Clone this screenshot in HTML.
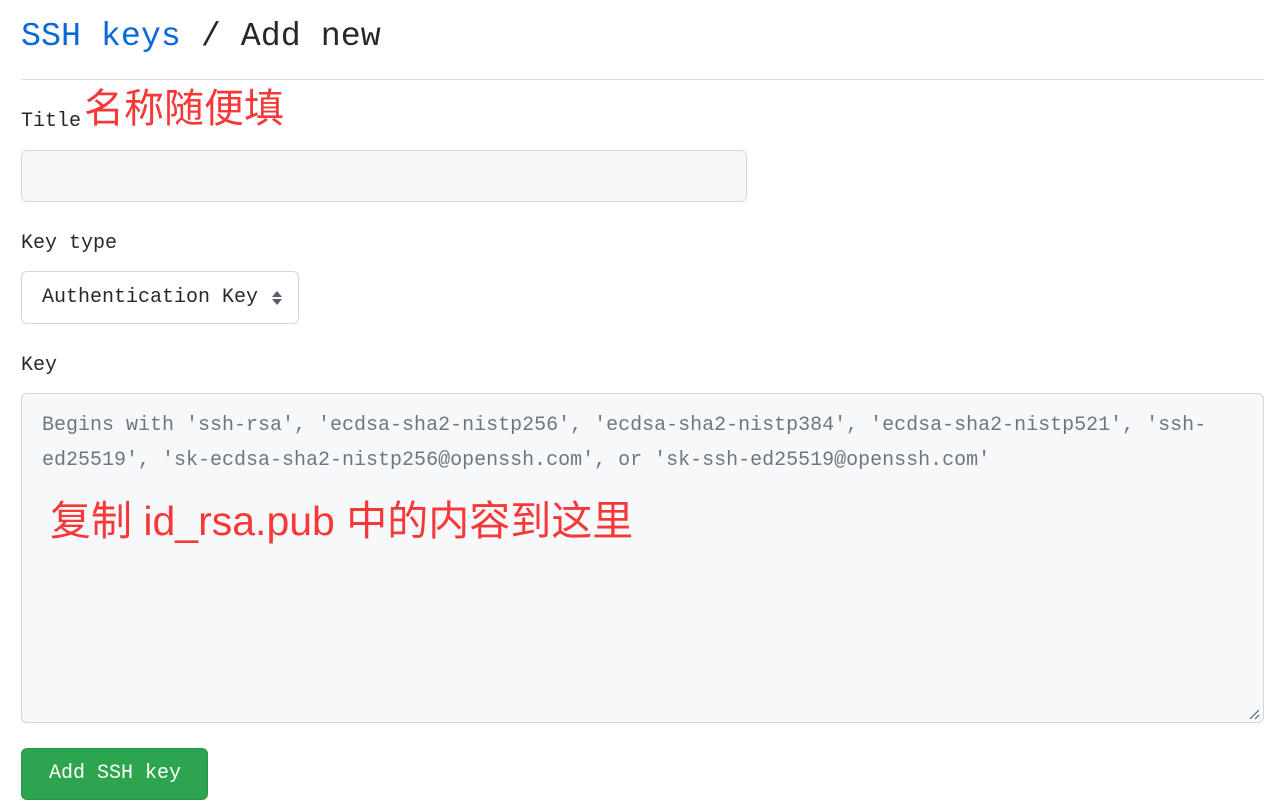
<!DOCTYPE html>
<html><head><meta charset="utf-8"><style>
body{margin:0;background:#fff;width:1282px;height:809px;overflow:hidden;position:relative;font-family:"Liberation Mono",monospace;color:#24292f}
.a{position:absolute;white-space:nowrap}
.m{font-size:20px;letter-spacing:0}
.box{position:absolute;border:1px solid #d0d7de;border-radius:6px;box-sizing:border-box}
.red{color:#f73838;font-family:"Liberation Sans","Noto Sans CJK SC",sans-serif}
</style></head><body>
<div class="a" style="left:21px;top:12px;font-size:33.3px;line-height:48px"><span style="color:#0969da">SSH keys</span> / Add new</div>
<div class="a" style="left:21px;right:18px;top:79px;height:1px;background:#d8dee4"></div>
<div class="a m" style="left:21px;top:110px;line-height:24px">Title</div>
<div class="a red" style="left:84px;top:84px;font-size:40px;line-height:50px">名称随便填</div>
<div class="box" style="left:21px;top:150px;width:726px;height:52px;background:#f6f8fa"></div>
<div class="a m" style="left:21px;top:232px;line-height:24px">Key type</div>
<div class="box" style="left:21px;top:271px;width:278px;height:53px;background:#fff"></div>
<div class="a m" style="left:42px;top:286px;line-height:24px">Authentication Key</div>
<svg class="a" style="left:270px;top:289px" width="14" height="18" viewBox="0 0 14 18"><path d="M7 2 L12 8 H2Z M2 10 H12 L7 16Z" fill="#57606a"/></svg>
<div class="a m" style="left:21px;top:354px;line-height:24px">Key</div>
<div class="box" style="left:21px;top:393px;width:1243px;height:330px;background:#f6f8fa"></div>
<div class="a m" style="left:42px;top:408px;line-height:35px;color:#6e7781">Begins with 'ssh-rsa', 'ecdsa-sha2-nistp256', 'ecdsa-sha2-nistp384', 'ecdsa-sha2-nistp521', 'ssh-<br>ed25519', 'sk-ecdsa-sha2-nistp256@openssh.com', or 'sk-ssh-ed25519@openssh.com'</div>
<div class="a red" style="left:50px;top:494px;font-size:41px;line-height:54px">复制 id_rsa.pub 中的内容到这里</div>
<svg class="a" style="left:1248px;top:708px" width="12" height="12"><path d="M11 2 L2 11 M11 7 L7 11" stroke="#57606a" stroke-width="1.2"/></svg>
<div class="a" style="left:21px;top:748px;width:187px;height:52px;background:#2da44e;border-radius:6px;border:1px solid #2a9147;box-sizing:border-box"></div>
<div class="a m" style="left:49px;top:762px;line-height:24px;color:#fff">Add SSH key</div>
</body></html>
